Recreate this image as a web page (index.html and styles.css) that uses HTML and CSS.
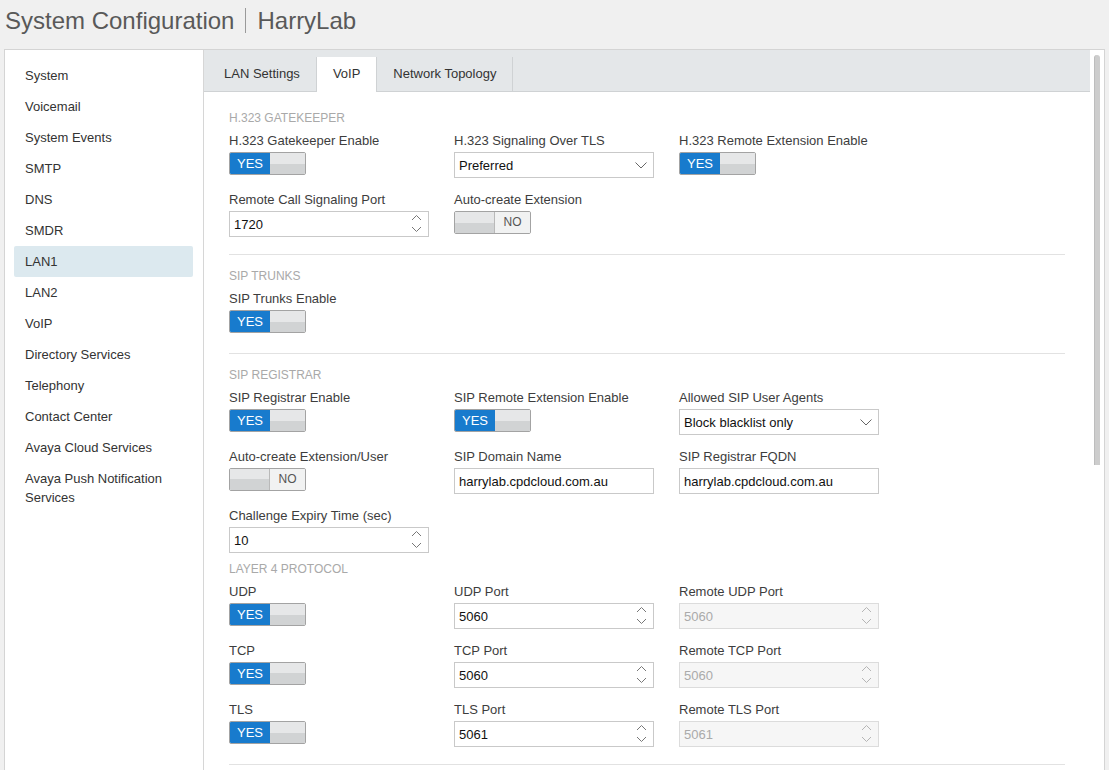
FILE: index.html
```html
<!DOCTYPE html>
<html lang="en">
    <head>
        <meta charset="UTF-8" />
        <meta name="viewport" content="width=device-width, initial-scale=1.0" />
        <title>System Configuration | HarryLab</title>
        <link rel="stylesheet" href="styles.css">
    </head>
    <body>
        <!-- 상단 타이틀 -->
        <header class="tit">
            <span>System Configuration</span>
            <i class="bar"></i>
            <span>HarryLab</span>
        </header>

        <!-- 전체박스 -->
        <div class="wrap">
            <!-- 왼쪽메뉴 -->
            <ul class="lnb">
                <li>System</li>
                <li>Voicemail</li>
                <li>System Events</li>
                <li>SMTP</li>
                <li>DNS</li>
                <li>SMDR</li>
                <li class="on">LAN1</li>
                <li>LAN2</li>
                <li>VoIP</li>
                <li>Directory Services</li>
                <li>Telephony</li>
                <li>Contact Center</li>
                <li>Avaya Cloud Services</li>
                <li>Avaya Push Notification Services</li>
            </ul>

            <!-- 메인영역 -->
            <main class="main">
                <!-- 탭 -->
                <nav class="tabs">
                    <a href="#" class="tab">LAN Settings</a>
                    <a href="#" class="tab on">VoIP</a>
                    <a href="#" class="tab">Network Topology</a>
                </nav>

                <!-- 컨텐츠 -->
                <div class="cont">
                    <!-- H.323 -->
                    <section class="sec">
                        <h3>H.323 Gatekeeper</h3>
                        <div class="row">
                            <div class="fld">
                                <label>H.323 Gatekeeper Enable</label>
                                <div class="ctl"><span class="tgl"><b class="yes">YES</b><em class="off"></em></span></div>
                            </div>
                            <div class="fld">
                                <label>H.323 Signaling Over TLS</label>
                                <div class="ctl inp">Preferred
                                    <svg class="dd" width="12" height="7" viewBox="0 0 12 7"><path d="M0.5 0.5 L6 6 L11.5 0.5" /></svg>
                                </div>
                            </div>
                            <div class="fld">
                                <label>H.323 Remote Extension Enable</label>
                                <div class="ctl"><span class="tgl"><b class="yes">YES</b><em class="off"></em></span></div>
                            </div>
                            <div class="fld">
                                <label>Remote Call Signaling Port</label>
                                <div class="ctl inp">1720
                                    <svg class="spin" width="11" height="22" viewBox="0 0 11 22"><path d="M1 7 L5.5 2.5 L10 7 M1 14 L5.5 18.5 L10 14" /></svg>
                                </div>
                            </div>
                            <div class="fld">
                                <label>Auto-create Extension</label>
                                <div class="ctl"><span class="tgl"><em class="off"></em><b class="no">NO</b></span></div>
                            </div>
                        </div>
                    </section>

                    <!-- SIP 트렁크 -->
                    <section class="sec">
                        <h3>SIP Trunks</h3>
                        <div class="row">
                            <div class="fld">
                                <label>SIP Trunks Enable</label>
                                <div class="ctl"><span class="tgl"><b class="yes">YES</b><em class="off"></em></span></div>
                            </div>
                        </div>
                    </section>

                    <!-- SIP 레지스트라 -->
                    <section class="sec">
                        <h3>SIP Registrar</h3>
                        <div class="row">
                            <div class="fld">
                                <label>SIP Registrar Enable</label>
                                <div class="ctl"><span class="tgl"><b class="yes">YES</b><em class="off"></em></span></div>
                            </div>
                            <div class="fld">
                                <label>SIP Remote Extension Enable</label>
                                <div class="ctl"><span class="tgl"><b class="yes">YES</b><em class="off"></em></span></div>
                            </div>
                            <div class="fld">
                                <label>Allowed SIP User Agents</label>
                                <div class="ctl inp">Block blacklist only
                                    <svg class="dd" width="12" height="7" viewBox="0 0 12 7"><path d="M0.5 0.5 L6 6 L11.5 0.5" /></svg>
                                </div>
                            </div>
                            <div class="fld">
                                <label>Auto-create Extension/User</label>
                                <div class="ctl"><span class="tgl"><em class="off"></em><b class="no">NO</b></span></div>
                            </div>
                            <div class="fld">
                                <label>SIP Domain Name</label>
                                <div class="ctl inp">harrylab.cpdcloud.com.au</div>
                            </div>
                            <div class="fld">
                                <label>SIP Registrar FQDN</label>
                                <div class="ctl inp">harrylab.cpdcloud.com.au</div>
                            </div>
                            <div class="fld">
                                <label>Challenge Expiry Time (sec)</label>
                                <div class="ctl inp">10
                                    <svg class="spin" width="11" height="22" viewBox="0 0 11 22"><path d="M1 7 L5.5 2.5 L10 7 M1 14 L5.5 18.5 L10 14" /></svg>
                                </div>
                            </div>
                        </div>

                        <!-- 레이어4 프로토콜 -->
                        <h3 class="sub">Layer 4 Protocol</h3>
                        <div class="row">
                            <div class="fld">
                                <label>UDP</label>
                                <div class="ctl"><span class="tgl"><b class="yes">YES</b><em class="off"></em></span></div>
                            </div>
                            <div class="fld">
                                <label>UDP Port</label>
                                <div class="ctl inp">5060
                                    <svg class="spin" width="11" height="22" viewBox="0 0 11 22"><path d="M1 7 L5.5 2.5 L10 7 M1 14 L5.5 18.5 L10 14" /></svg>
                                </div>
                            </div>
                            <div class="fld">
                                <label>Remote UDP Port</label>
                                <div class="ctl inp dis">5060
                                    <svg class="spin" width="11" height="22" viewBox="0 0 11 22"><path d="M1 7 L5.5 2.5 L10 7 M1 14 L5.5 18.5 L10 14" /></svg>
                                </div>
                            </div>
                            <div class="fld">
                                <label>TCP</label>
                                <div class="ctl"><span class="tgl"><b class="yes">YES</b><em class="off"></em></span></div>
                            </div>
                            <div class="fld">
                                <label>TCP Port</label>
                                <div class="ctl inp">5060
                                    <svg class="spin" width="11" height="22" viewBox="0 0 11 22"><path d="M1 7 L5.5 2.5 L10 7 M1 14 L5.5 18.5 L10 14" /></svg>
                                </div>
                            </div>
                            <div class="fld">
                                <label>Remote TCP Port</label>
                                <div class="ctl inp dis">5060
                                    <svg class="spin" width="11" height="22" viewBox="0 0 11 22"><path d="M1 7 L5.5 2.5 L10 7 M1 14 L5.5 18.5 L10 14" /></svg>
                                </div>
                            </div>
                            <div class="fld">
                                <label>TLS</label>
                                <div class="ctl"><span class="tgl"><b class="yes">YES</b><em class="off"></em></span></div>
                            </div>
                            <div class="fld">
                                <label>TLS Port</label>
                                <div class="ctl inp">5061
                                    <svg class="spin" width="11" height="22" viewBox="0 0 11 22"><path d="M1 7 L5.5 2.5 L10 7 M1 14 L5.5 18.5 L10 14" /></svg>
                                </div>
                            </div>
                            <div class="fld">
                                <label>Remote TLS Port</label>
                                <div class="ctl inp dis">5061
                                    <svg class="spin" width="11" height="22" viewBox="0 0 11 22"><path d="M1 7 L5.5 2.5 L10 7 M1 14 L5.5 18.5 L10 14" /></svg>
                                </div>
                            </div>
                        </div>
                    </section>
                </div>
            </main>

            <!-- 스크롤바 모양 -->
            <div class="scbar"><span class="thumb"></span></div>
        </div>
    </body>
</html>
```

FILE: styles.css
```css
/* 기본셋팅 */
* {
    box-sizing: border-box;
}

body {
    margin: 0;
    height: 100vh;
    overflow: hidden;
    background-color: #f0f0f0;
    font-family: "Liberation Sans", Arial, sans-serif;
    color: #333;
}

/* 상단 타이틀 */
.tit {
    display: flex;
    align-items: center;
    height: 49px;
    padding: 0 0 8px 5px;
    font-size: 24px;
    color: #595959;
}
.tit .bar {
    width: 1px;
    height: 25px;
    margin: 0 11px;
    background-color: #9a9a9a;
}

/* 전체박스 */
.wrap {
    display: flex;
    width: 1101px;
    height: 721px;
    margin-left: 4px;
    overflow: hidden;
    background-color: #fff;
    border: 1px solid #d4d4d4;
    border-bottom: 0;
}

/* 왼쪽메뉴 */
.lnb {
    flex: none;
    width: 199px;
    margin: 0;
    padding: 10px 10px 0 9px;
    list-style: none;
    border-right: 1px solid #d6d6d6;
}
.lnb li {
    padding: 6px 11px;
    font-size: 13px;
    line-height: 19px;
    color: #333;
    border-radius: 2px;
}
.lnb li.on {
    background-color: #dce9ef;
}

/* 메인영역 */
.main {
    flex: none;
    width: 886px;
}

/* 탭 */
.tabs {
    display: flex;
    align-items: flex-end;
    height: 42px;
    background-color: #e4e7e9;
    border-bottom: 1px solid #cfd2d4;
}
.tab {
    height: 34px;
    padding: 0 16px;
    font-size: 13px;
    line-height: 34px;
    color: #333;
    text-decoration: none;
    border-right: 1px solid #cfd2d4;
}
.tab:first-child {
    padding-left: 20px;
}
.tab.on {
    height: 35px;
    margin-bottom: -1px;
    background-color: #fff;
}

/* 컨텐츠 */
.cont {
    padding: 5px 25px 0;
}
.sec {
    padding: 14px 0 17px;
    border-bottom: 1px solid #e2e2e2;
}
.sec h3 {
    margin: 0 0 7px;
    font-size: 12px;
    font-weight: normal;
    line-height: 14px;
    text-transform: uppercase;
    color: #a9a9a9;
}
.sec h3.sub {
    margin-top: 9px;
}

/* 3칸 그리드 */
.row {
    display: grid;
    grid-template-columns: repeat(3, 200px);
    column-gap: 25px;
    row-gap: 13px;
}
.fld label {
    display: block;
    margin-bottom: 3px;
    padding-top: 1px;
    font-size: 13px;
    line-height: 16px;
    color: #3d3d3d;
    white-space: nowrap;
}
.ctl {
    height: 26px;
}

/* 입력박스 */
.inp {
    display: flex;
    align-items: center;
    justify-content: space-between;
    padding: 0 6px 0 4px;
    font-size: 13px;
    color: #111;
    border: 1px solid #c9c9c9;
    background-color: #fff;
}
.inp svg {
    fill: none;
    stroke: #777;
    stroke-width: 1;
}
.inp .dd {
    stroke: #666;
}
.inp.dis {
    color: #aaa;
    background-color: #f6f6f6;
    border-color: #dcdcdc;
}
.inp.dis svg {
    stroke: #b5b5b5;
}

/* 토글 스위치 */
.tgl {
    display: flex;
    width: 77px;
    height: 23px;
    overflow: hidden;
    border: 1px solid #a3a3a3;
    border-radius: 2px;
}
.tgl .yes {
    width: 40px;
    font-size: 13px;
    font-weight: normal;
    line-height: 21px;
    text-align: center;
    color: #fff;
    background-color: #187bcd;
}
.tgl .off {
    flex: 1;
    background: linear-gradient(#e6e7e8 50%, #d1d3d4 50%);
}
.tgl .no {
    width: 36px;
    font-size: 12px;
    font-weight: normal;
    line-height: 21px;
    text-align: center;
    color: #555;
    background-color: #f1f2f2;
    border-left: 1px solid #b9b9b9;
}
.tgl .off + .no {
    flex: none;
}

/* 스크롤바 모양 */
.scbar {
    flex: none;
    width: 13px;
    padding: 5px 0 0 4px;
}
.scbar .thumb {
    display: block;
    width: 6px;
    height: 410px;
    background-color: #cdcdcd;
    border-left: 1px solid #bdbdbd;
    border-radius: 3px 3px 0 0;
}
```
